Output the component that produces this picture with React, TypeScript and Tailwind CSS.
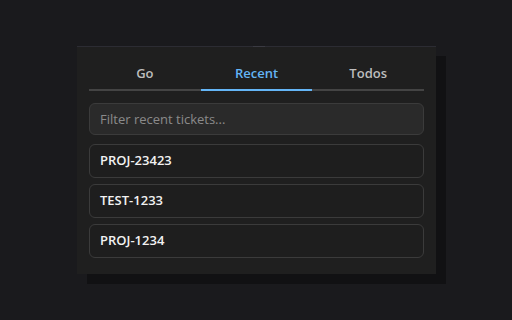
import { useState } from 'react';

const tickets = ['PROJ-23423', 'TEST-1233', 'PROJ-1234'];
const tabs = ['Go', 'Recent', 'Todos'];

export default function App() {
  const [active, setActive] = useState('Recent');

  return (
    <div className="w-[512px] h-[320px] bg-[#1a1a1d] pt-[46px] pl-[77px] font-['Open_Sans',sans-serif]">
      <div className="relative w-[359px] h-[228px] bg-[#1f1f1f] border-t border-[#2c2c33] shadow-[10px_10px_0_rgba(12,12,14,0.6)] px-3 pt-3">
        <div className="absolute left-[176px] -top-px w-3 h-px bg-[#3a3a42]" />
        {/* Tabs */}
        <div className="flex">
          {tabs.map((t) => (
            <button
              key={t}
              type="button"
              onClick={() => setActive(t)}
              className={`flex-1 h-[32px] border-b-2 text-[13px] font-semibold ${
                active === t ? 'border-[#64b5f6] text-[#64b5f6]' : 'border-[#444] text-[#bdbdbd]'
              }`}
            >
              {t}
            </button>
          ))}
        </div>

        {/* Filter */}
        <input
          className="mt-3 w-full h-[32px] rounded-md bg-[#2a2a2a] border border-[#3b3b3b] px-[10px] text-[13px] text-[#ddd] placeholder-[#8a8a8a] outline-none"
          placeholder="Filter recent tickets..."
        />

        {/* Tickets */}
        <div className="mt-[9px] flex flex-col gap-[6px]">
          {tickets.map((t) => (
            <div
              key={t}
              className="h-[34px] flex items-center px-[10px] rounded-md border border-[#3b3b3b] bg-[#1e1e1e] text-[13px] font-semibold text-[#f2f2f2]"
            >
              {t}
            </div>
          ))}
        </div>
      </div>
    </div>
  );
}
